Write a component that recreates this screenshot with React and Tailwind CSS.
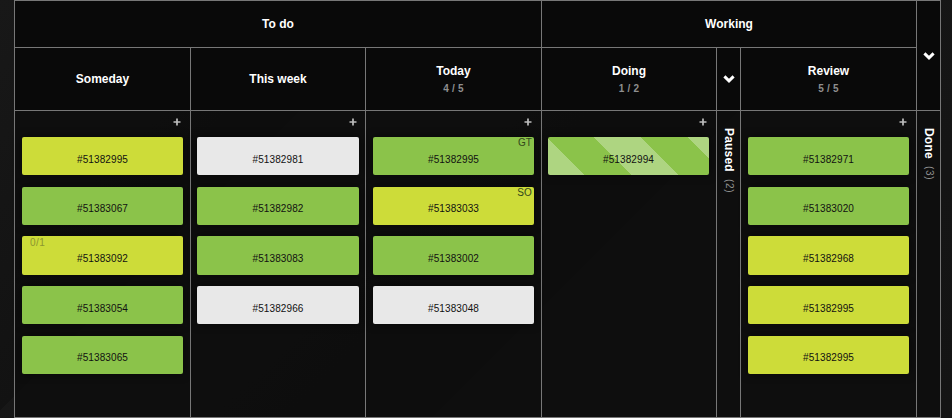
const F = "font-['Liberation_Sans',Arial,sans-serif]";

const COLORS = {
  g: "bg-[#8bc34a]",
  y: "bg-[#cddc39]",
  w: "bg-[#e8e8e8]",
  s: "bg-[#8bc34a] bg-[repeating-linear-gradient(45deg,#aed581_0px,#aed581_25.5px,#8bc34a_25.5px,#8bc34a_59px,#aed581_59px,#aed581_66.5px)]",
};

function Card({ id, c, tag, prog, last }) {
  return (
    <div className={`relative h-[38.3px] rounded-[2px] shadow-[0_0_8px_rgba(0,0,0,0.55)] flex items-center justify-center pt-[6px] text-[10px] tracking-[0.1px] text-[#111111] ${COLORS[c]} ${last ? "" : "mb-[11.4px]"}`}>
      {id}
      {tag && <span className="absolute right-[2px] top-0 leading-[12px] text-[#33471c]">{tag}</span>}
      {prog && <span className="absolute left-[8px] top-[1px] leading-[12px] tracking-[0.5px] text-[#8c9630]">{prog}</span>}
    </div>
  );
}

function Plus({ pr }) {
  return (
    <div className={`h-[26px] flex justify-end items-start pt-[7px] ${pr}`}>
      <svg width="8" height="8" viewBox="0 0 8 8"><path d="M4 0.5v7M0.5 4h7" stroke="#bdbdbd" strokeWidth="1.7" fill="none" /></svg>
    </div>
  );
}

function Chevron() {
  return (
    <svg width="12" height="8" viewBox="0 0 12 8"><path d="M1.4 1.4L6 5.8L10.6 1.4" stroke="#ffffff" strokeWidth="3" fill="none" /></svg>
  );
}

function Head({ title, sub, span, cls = "" }) {
  return (
    <div className={`border-l border-t border-[#777] bg-[#090909] flex flex-col items-center justify-center ${span || ""} ${cls}`}>
      <div className="text-[12px] font-bold text-white leading-[14px]">{title}</div>
      {sub && <div className="mt-[5px] text-[10px] font-bold tracking-[0.2px] text-[#8f8f8f] leading-[12px]">{sub}</div>}
    </div>
  );
}

function Col({ cards, pl, pr, plus }) {
  return (
    <div className={`border-l border-t border-[#777] bg-[#0d0d0d]/80 ${pl} ${pr}`}>
      <Plus pr={plus} />
      {cards.map((x, i) => (
        <Card key={i} {...x} last={i === cards.length - 1} />
      ))}
    </div>
  );
}

function Side({ label, n }) {
  return (
    <div className="border-l border-t border-[#777] bg-[#0d0d0d]/80 flex flex-col items-center pt-[17px]">
      <div className="[writing-mode:vertical-rl] text-[12px] font-bold text-white leading-[14px] tracking-[0.2px]">{label}</div>
      <div className="[writing-mode:vertical-rl] mt-[7px] text-[10px] text-[#8f8f8f] leading-[12px] tracking-[0.7px]">({n})</div>
    </div>
  );
}

export default function App() {
  return (
    <div className={`${F} w-[952px] h-[418px] overflow-hidden bg-[#161616] bg-[linear-gradient(135deg,#181818_0%,#121212_30%,#171717_30%,#111111_62%,#161616_62%,#141414_100%)]`}>
      <div className="ml-[14px] w-[927px] h-[418px] border-r border-b border-[#777] grid grid-cols-[176px_175px_176px_175px_24px_176px_24px] grid-rows-[47px_63px_307px]">
        <Head title="To do" span="col-span-3" />
        <Head title="Working" span="col-span-3" />
        <div className="row-span-2 border-l border-t border-[#777] bg-[#090909] flex items-center justify-center">
          <Chevron />
        </div>
        <Head title="Someday" />
        <Head title="This week" />
        <Head title="Today" sub="4 / 5" />
        <Head title="Doing" sub="1 / 2" />
        <div className="border-l border-t border-[#777] bg-[#090909] flex items-center justify-center">
          <Chevron />
        </div>
        <Head title="Review" sub="5 / 5" />
        <Col
          pl="pl-[7px]" pr="pr-[7px]" plus="pr-[2px]"
          cards={[
            { id: "#51382995", c: "y" },
            { id: "#51383067", c: "g" },
            { id: "#51383092", c: "y", prog: "0/1" },
            { id: "#51383054", c: "g" },
            { id: "#51383065", c: "g" },
          ]}
        />
        <Col
          pl="pl-[6px]" pr="pr-[6px]" plus="pr-[2px]"
          cards={[
            { id: "#51382981", c: "w" },
            { id: "#51382982", c: "g" },
            { id: "#51383083", c: "g" },
            { id: "#51382966", c: "w" },
          ]}
        />
        <Col
          pl="pl-[7px]" pr="pr-[7px]" plus="pr-[2px]"
          cards={[
            { id: "#51382995", c: "g", tag: "GT" },
            { id: "#51383033", c: "y", tag: "SO" },
            { id: "#51383002", c: "g" },
            { id: "#51383048", c: "w" },
          ]}
        />
        <Col
          pl="pl-[6px]" pr="pr-[7px]" plus="pr-[2px]"
          cards={[{ id: "#51382994", c: "s" }]}
        />
        <Side label="Paused" n="2" />
        <Col
          pl="pl-[7px]" pr="pr-[7px]" plus="pr-[2px]"
          cards={[
            { id: "#51382971", c: "g" },
            { id: "#51383020", c: "g" },
            { id: "#51382968", c: "y" },
            { id: "#51382995", c: "y" },
            { id: "#51382995", c: "y" },
          ]}
        />
        <Side label="Done" n="3" />
      </div>
    </div>
  );
}
